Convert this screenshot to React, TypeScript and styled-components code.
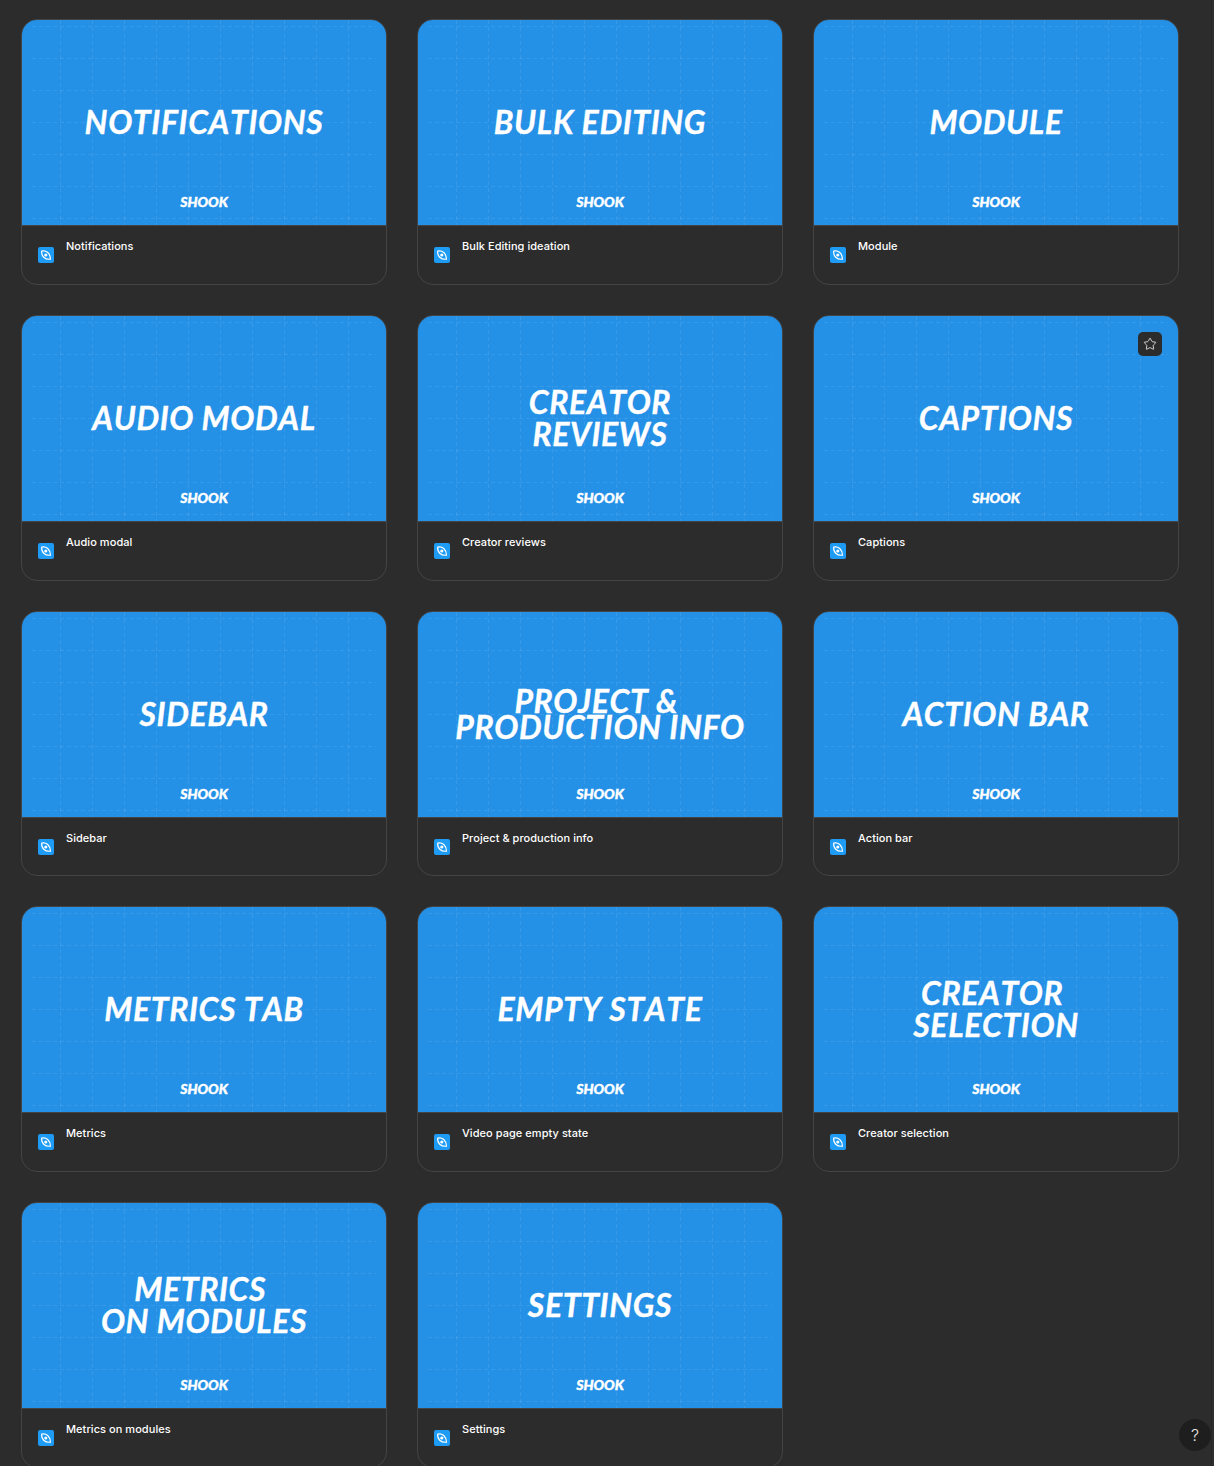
import React from "react";
import styled, { createGlobalStyle } from "styled-components";
import { Star } from "lucide-react";

const GlobalStyle = createGlobalStyle`
  html, body {
    margin: 0;
    height: 100%;
    overflow: hidden;
    background: #2c2c2c;
  }
`;

const Page = styled.div`
  display: grid;
  grid-template-columns: repeat(3, 366px);
  grid-auto-rows: 265.75px;
  column-gap: 30px;
  row-gap: 30px;
  padding: 19px 0 0 21px;
  font-family: Inter, "Liberation Sans", sans-serif;
`;

const Card = styled.div`
  display: flex;
  flex-direction: column;
  box-sizing: border-box;
  border: 1px solid #444444;
  border-radius: 16px;
  overflow: hidden;
  background: #2c2c2c;
`;

const Thumb = styled.div`
  position: relative;
  flex: 0 0 206px;
  box-sizing: border-box;
  display: grid;
  background: #2490e6;
  color: #ffffff;
  border-bottom: 1px solid #444444;
`;

const GridLines = styled.svg`
  position: absolute;
  inset: 0;
  width: 100%;
  height: 100%;
`;

const Title = styled.div<{ $tight?: boolean }>`
  grid-area: 1 / 1;
  align-self: center;
  justify-self: center;
  position: relative;
  margin-top: -1px;
  font-family: Lato, "Liberation Sans", sans-serif;
  font-style: italic;
  font-weight: 700;
  font-size: 32px;
  font-kerning: none;
  letter-spacing: 0.6px;
  line-height: ${(p) => (p.$tight ? "26px" : "32px")};
  text-align: center;
  white-space: pre;
  -webkit-text-stroke: 0.35px #ffffff;
`;

const Brand = styled.div`
  grid-area: 1 / 1;
  align-self: end;
  justify-self: center;
  position: relative;
  margin-bottom: 15px;
  font-family: Lato, "Liberation Sans", sans-serif;
  font-style: italic;
  font-weight: 900;
  font-size: 14px;
  line-height: 17px;
  -webkit-text-stroke: 0.4px #ffffff;
`;

const StarButton = styled.div`
  position: absolute;
  top: 16px;
  right: 16px;
  width: 24px;
  height: 24px;
  display: flex;
  align-items: center;
  justify-content: center;
  border-radius: 5px;
  background: #2c2c2c;
  color: #e6e6e6;
`;

const Footer = styled.div`
  flex: 1;
  display: flex;
  align-items: flex-start;
  padding: 21px 16px 0;
`;

const FileBadge = styled.div`
  flex: none;
  width: 16px;
  height: 16px;
  border-radius: 2px;
  background: #1e9bf5;
`;

const Name = styled.div`
  margin: -9px 0 0 12px;
  font-size: 11px;
  font-weight: 500;
  letter-spacing: 0.05px;
  line-height: 16px;
  color: #ffffff;
`;

const ScrollTrack = styled.div`
  position: fixed;
  top: 0;
  right: 0;
  bottom: 0;
  width: 2px;
  border-left: 1px solid #272727;
  background: #2e2e2e;
`;

const Help = styled.div`
  position: fixed;
  right: 3px;
  bottom: 15px;
  width: 32px;
  height: 32px;
  display: flex;
  align-items: center;
  justify-content: center;
  border-radius: 50%;
  background: #1e1e1e;
  color: #e6e6e6;
  font-family: Inter, "Liberation Sans", sans-serif;
  font-size: 16px;
  font-weight: 300;
`;

type Item = { title: string; name: string; tight?: boolean; starred?: boolean };

const items: Item[] = [
  { title: "NOTIFICATIONS", name: "Notifications" },
  { title: "BULK EDITING", name: "Bulk Editing ideation" },
  { title: "MODULE", name: "Module" },
  { title: "AUDIO MODAL", name: "Audio modal" },
  { title: "CREATOR\nREVIEWS", name: "Creator reviews" },
  { title: "CAPTIONS", name: "Captions", starred: true },
  { title: "SIDEBAR", name: "Sidebar" },
  { title: "PROJECT & \nPRODUCTION INFO", name: "Project & production info", tight: true },
  { title: "ACTION BAR", name: "Action bar" },
  { title: "METRICS TAB", name: "Metrics" },
  { title: "EMPTY STATE", name: "Video page empty state" },
  { title: "CREATOR \nSELECTION", name: "Creator selection" },
  { title: "METRICS \nON MODULES", name: "Metrics on modules" },
  { title: "SETTINGS", name: "Settings" },
];

const Lines = () => (
  <GridLines viewBox="0 0 364 205" aria-hidden="true">
    <g stroke="#ffffff" strokeOpacity="0.09" strokeWidth="1" strokeDasharray="4 3">
      {Array.from({ length: 10 }, (_, i) => (
        <line key={i} x1={38.5 + i * 32} y1="0" x2={38.5 + i * 32} y2="205" />
      ))}
      {Array.from({ length: 7 }, (_, i) => (
        <line key={i} x1="10" y1={6.5 + i * 32} x2="354" y2={6.5 + i * 32} />
      ))}
    </g>
  </GridLines>
);

const FileIcon = () => (
  <FileBadge>
    <svg width="16" height="16" viewBox="0 0 16 16" fill="none">
      <path
        d="M3.7 4C8.4 3.2 12.2 6 12.5 12.2C6.6 12.7 3.2 9.2 3.7 4Z"
        stroke="#ffffff"
        strokeWidth="1.2"
        strokeLinejoin="round"
      />
      <circle cx="7.8" cy="8" r="1.6" fill="#ffffff" />
    </svg>
  </FileBadge>
);

const App = () => {
  return (
    <>
      <GlobalStyle />
      <Page>
        {items.map((item) => (
          <Card key={item.name}>
            <Thumb>
              <Lines />
              <Title $tight={item.tight}>{item.title}</Title>
              <Brand>SHOOK</Brand>
              {item.starred && (
                <StarButton>
                  <Star size={14} strokeWidth={1.5} />
                </StarButton>
              )}
            </Thumb>
            <Footer>
              <FileIcon />
              <Name>{item.name}</Name>
            </Footer>
          </Card>
        ))}
      </Page>
      <ScrollTrack />
      <Help>?</Help>
    </>
  );
};

export default App;
